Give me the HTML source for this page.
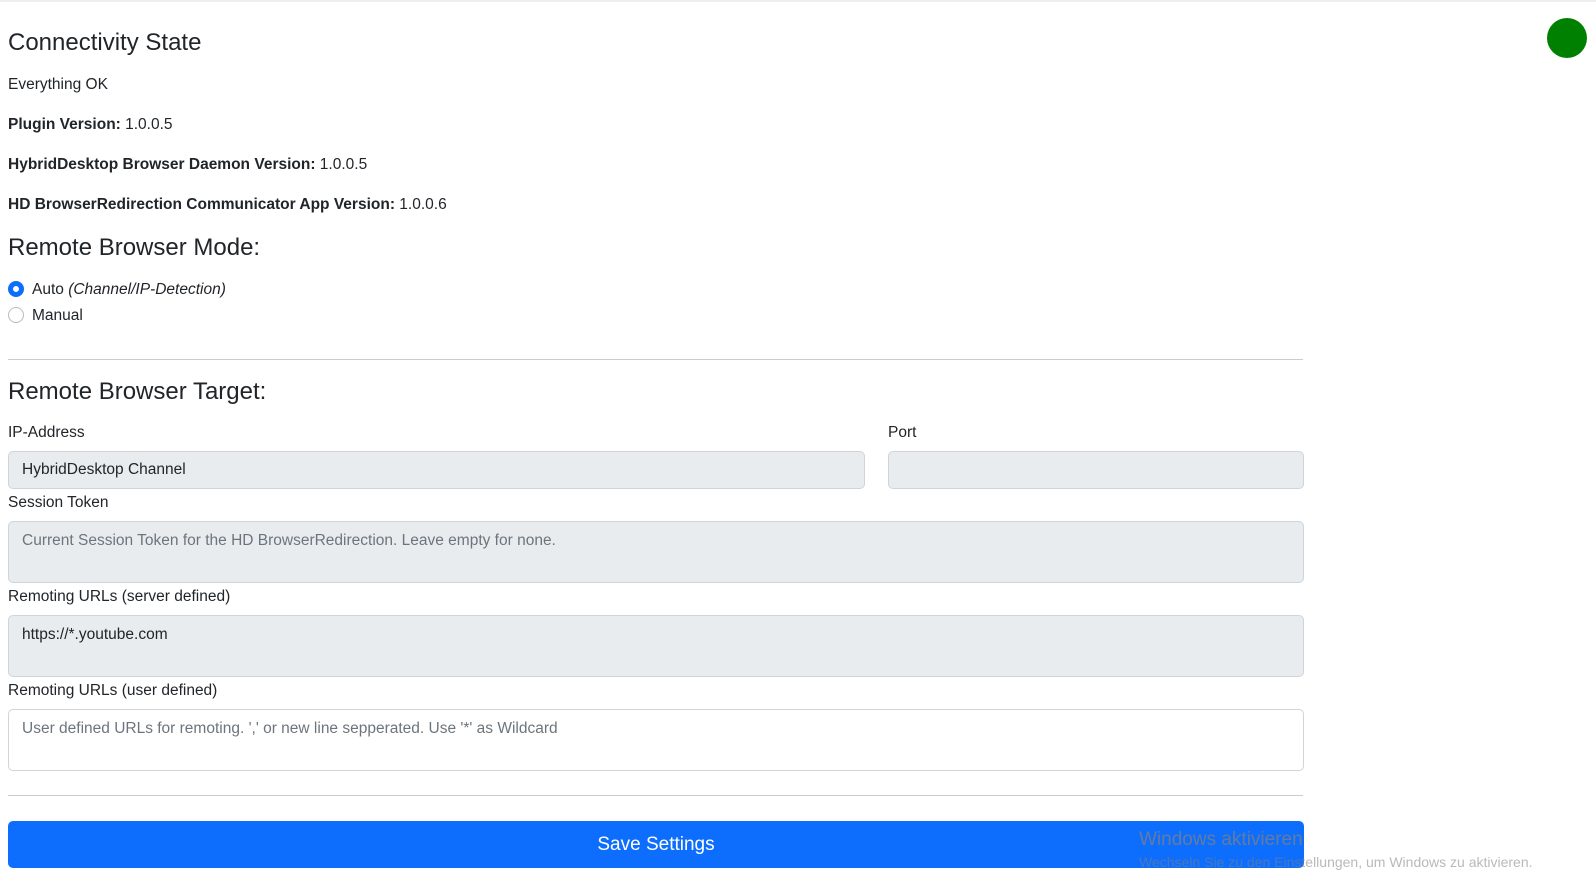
<!DOCTYPE html>
<html><head><meta charset="utf-8"><style>
*{box-sizing:border-box;margin:0;padding:0}
body{width:1596px;height:885px;background:#fff;font-family:"Liberation Sans",sans-serif;color:#212529;position:relative;overflow:hidden;border-top:2px solid #eee}
.a{position:absolute;white-space:nowrap;line-height:1}
.h{font-size:24px;font-weight:500}
.t{font-size:15.5px}
b{font-weight:bold}
.f{position:absolute;background:#e9ecef;border:1px solid #ced4da;border-radius:5px;font-size:15.5px;padding-left:13px;color:#212529}
.ph{color:#6c757d}
hr{position:absolute;left:8px;width:1295px;border:0;border-top:1px solid #ccc}
.r{position:absolute;left:8px;width:16px;height:16px;border-radius:50%}
</style></head><body>
<div style="position:absolute;left:1547px;top:16px;width:40px;height:40px;border-radius:50%;background:#008000"></div>
<div class="a h" style="left:8px;top:29px">Connectivity State</div>
<div class="a t" style="left:8px;top:75px">Everything OK</div>
<div class="a t" style="left:8px;top:115px"><b>Plugin Version:</b> 1.0.0.5</div>
<div class="a t" style="left:8px;top:155px"><b>HybridDesktop Browser Daemon Version:</b> 1.0.0.5</div>
<div class="a t" style="left:8px;top:195px"><b>HD BrowserRedirection Communicator App Version:</b> 1.0.0.6</div>
<div class="a h" style="left:8px;top:234px">Remote Browser Mode:</div>
<div class="r" style="top:279px;background:#fff;border:5px solid #0d6efd"></div>
<div class="a t" style="left:32px;top:280px">Auto <i>(Channel/IP-Detection)</i></div>
<div class="r" style="top:305px;border:1px solid #bbb"></div>
<div class="a t" style="left:32px;top:306px">Manual</div>
<hr style="top:357px">
<div class="a h" style="left:8px;top:378px">Remote Browser Target:</div>
<div class="a t" style="left:8px;top:423px">IP-Address</div>
<div class="a t" style="left:888px;top:423px">Port</div>
<div class="f" style="left:8px;top:449px;width:857px;height:38px;line-height:36px">HybridDesktop Channel</div>
<div class="f" style="left:888px;top:449px;width:416px;height:38px"></div>
<div class="a t" style="left:8px;top:493px">Session Token</div>
<div class="f ph" style="left:8px;top:519px;width:1296px;height:62px;padding-top:10px">Current Session Token for the HD BrowserRedirection. Leave empty for none.</div>
<div class="a t" style="left:8px;top:587px">Remoting URLs (server defined)</div>
<div class="f" style="left:8px;top:613px;width:1296px;height:62px;padding-top:10px">https://*.youtube.com</div>
<div class="a t" style="left:8px;top:681px">Remoting URLs (user defined)</div>
<div class="f ph" style="left:8px;top:707px;width:1296px;height:62px;padding-top:10px;background:#fff">User defined URLs for remoting. ',' or new line sepperated. Use '*' as Wildcard</div>
<hr style="top:793px">
<div style="position:absolute;left:8px;top:819px;width:1296px;height:47px;background:#0d6efd;border-radius:5px;color:#fff;font-size:19px;text-align:center;line-height:47px">Save Settings</div>
<div class="a" style="left:1139px;top:828px;font-size:19px;color:rgba(128,128,128,.75)">Windows aktivieren</div>
<div class="a" style="left:1139px;top:853px;font-size:14px;color:rgba(128,128,128,.55)">Wechseln Sie zu den Einstellungen, um Windows zu aktivieren.</div>
</body></html>
